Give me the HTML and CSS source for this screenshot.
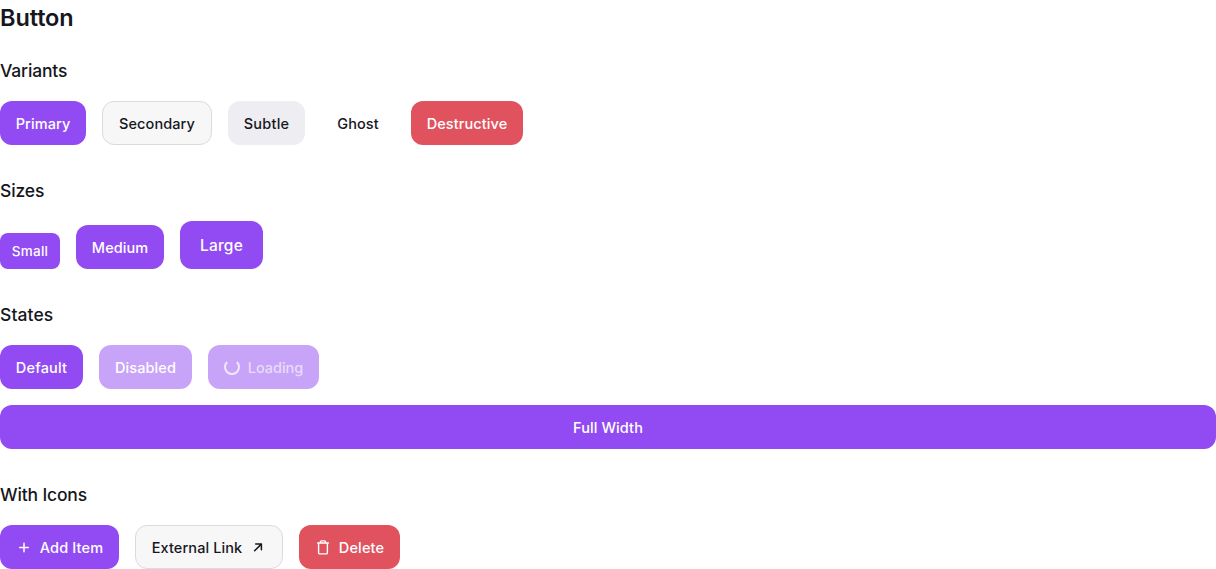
FILE: index.html
```html
<!DOCTYPE html>
<html lang="en">
<head>
<meta charset="utf-8">
<title>Button</title>
<link rel="stylesheet" href="styles.css">
</head>
<body>
<main class="page">
  <h1 class="title">Button</h1>
  <section class="section">
    <h2 class="heading">Variants</h2>
    <div class="row">
      <button class="btn primary w-primary">Primary</button>
      <button class="btn secondary w-secondary">Secondary</button>
      <button class="btn subtle w-subtle">Subtle</button>
      <button class="btn ghost w-ghost">Ghost</button>
      <button class="btn destructive w-destructive">Destructive</button>
    </div>
  </section>
  <section class="section">
    <h2 class="heading">Sizes</h2>
    <div class="row row-end">
      <button class="btn primary small">Small</button>
      <button class="btn primary w-medium">Medium</button>
      <button class="btn primary large">Large</button>
    </div>
  </section>
  <section class="section">
    <h2 class="heading heading-states">States</h2>
    <div class="row">
      <button class="btn primary w-default">Default</button>
      <button class="btn primary w-disabled" disabled>Disabled</button>
      <button class="btn primary w-loading" disabled>
        <svg class="icon spinner" viewBox="0 0 16 16" fill="none" stroke="currentColor" stroke-width="2"><path d="M3.1 2A7 7 0 1 0 12.9 2"/></svg>
        <span class="loading-label">Loading</span>
      </button>
      <button class="btn primary full">Full Width</button>
    </div>
  </section>
  <section class="section">
    <h2 class="heading">With Icons</h2>
    <div class="row">
      <button class="btn primary w-add">
        <svg class="icon" viewBox="0 0 16 16" fill="none" stroke="currentColor" stroke-width="1.5" stroke-linecap="round"><path d="M8 3.2v8.6M3.7 7.5h8.6"/></svg>
        <span>Add Item</span>
      </button>
      <button class="btn secondary w-external">
        <span>External Link</span>
        <svg class="icon" viewBox="0 0 16 16" fill="none" stroke="currentColor" stroke-width="1.5" stroke-linecap="round" stroke-linejoin="round"><path d="M4.6 10.8L11.3 4.1M5.7 4h5.7v5.7"/></svg>
      </button>
      <button class="btn destructive w-delete">
        <svg class="icon" viewBox="0 0 16 16" fill="none" stroke="currentColor" stroke-width="1.4" stroke-linecap="round" stroke-linejoin="round"><path d="M2.6 3h10.8M5.4 3V1.9q0-1 1-1h3.2q1 0 1 1V3M3.6 3v9.7q0 1.2 1.2 1.2h6.4q1.2 0 1.2-1.2V3"/></svg>
        <span>Delete</span>
      </button>
    </div>
  </section>
</main>
</body>
</html>
```
FILE: styles.css
```css
* { box-sizing: border-box; }
body { margin: 0; background: #fff; color: #16171d; font-family: Inter, sans-serif; }
.page { display: flex; flex-direction: column; gap: 32px; }
.title { margin: 0 0 -11px; font-size: 23.5px; line-height: 35px; height: 36px; font-weight: 600; letter-spacing: -.1px; }
.section { display: flex; flex-direction: column; gap: 16px; }
.heading { margin: 0; font-size: 17.5px; line-height: 28px; font-weight: 450; letter-spacing: -.15px; }
.heading-states { letter-spacing: .1px; }
.row { display: flex; flex-wrap: wrap; gap: 16px; }
.row-end { align-items: flex-end; }
.btn { display: inline-flex; align-items: center; justify-content: center; gap: 8px; height: 44px; padding: 1px 0 0; border: 0; border-radius: 12px; background: transparent; color: inherit; font: 450 14.5px/20px Inter, sans-serif; letter-spacing: .1px; white-space: nowrap; }
.primary { background: #924bf2; color: #fff; }
.secondary { background: #f7f7f8; border: 1px solid #dadae2; }
.subtle { background: #eeedf2; }
.destructive { background: #e0525e; color: #fff; }
.small { width: 60px; height: 36px; padding: 0; border-radius: 8px; font-size: 13.5px; letter-spacing: .25px; }
.large { width: 83px; height: 48px; padding: 2px 0 0; font-size: 15.5px; letter-spacing: .2px; }
.btn:disabled { opacity: .5; }
.loading-label { opacity: .6; }
.spinner { opacity: .75; }
.full { width: 100%; }
.icon { width: 16px; height: 16px; flex: none; }
.w-primary { width: 86px; }
.w-secondary { width: 110px; }
.w-subtle { width: 77px; letter-spacing: .25px; }
.w-ghost { width: 74px; }
.w-destructive { width: 112px; }
.w-medium { width: 88px; letter-spacing: .05px; }
.w-default { width: 83px; letter-spacing: .2px; }
.w-disabled { width: 93px; }
.w-loading { width: 111px; letter-spacing: -.03px; }
.w-add { width: 119px; letter-spacing: .15px; }
.w-external { width: 148px; }
.w-delete { width: 101px; letter-spacing: .15px; }
```
